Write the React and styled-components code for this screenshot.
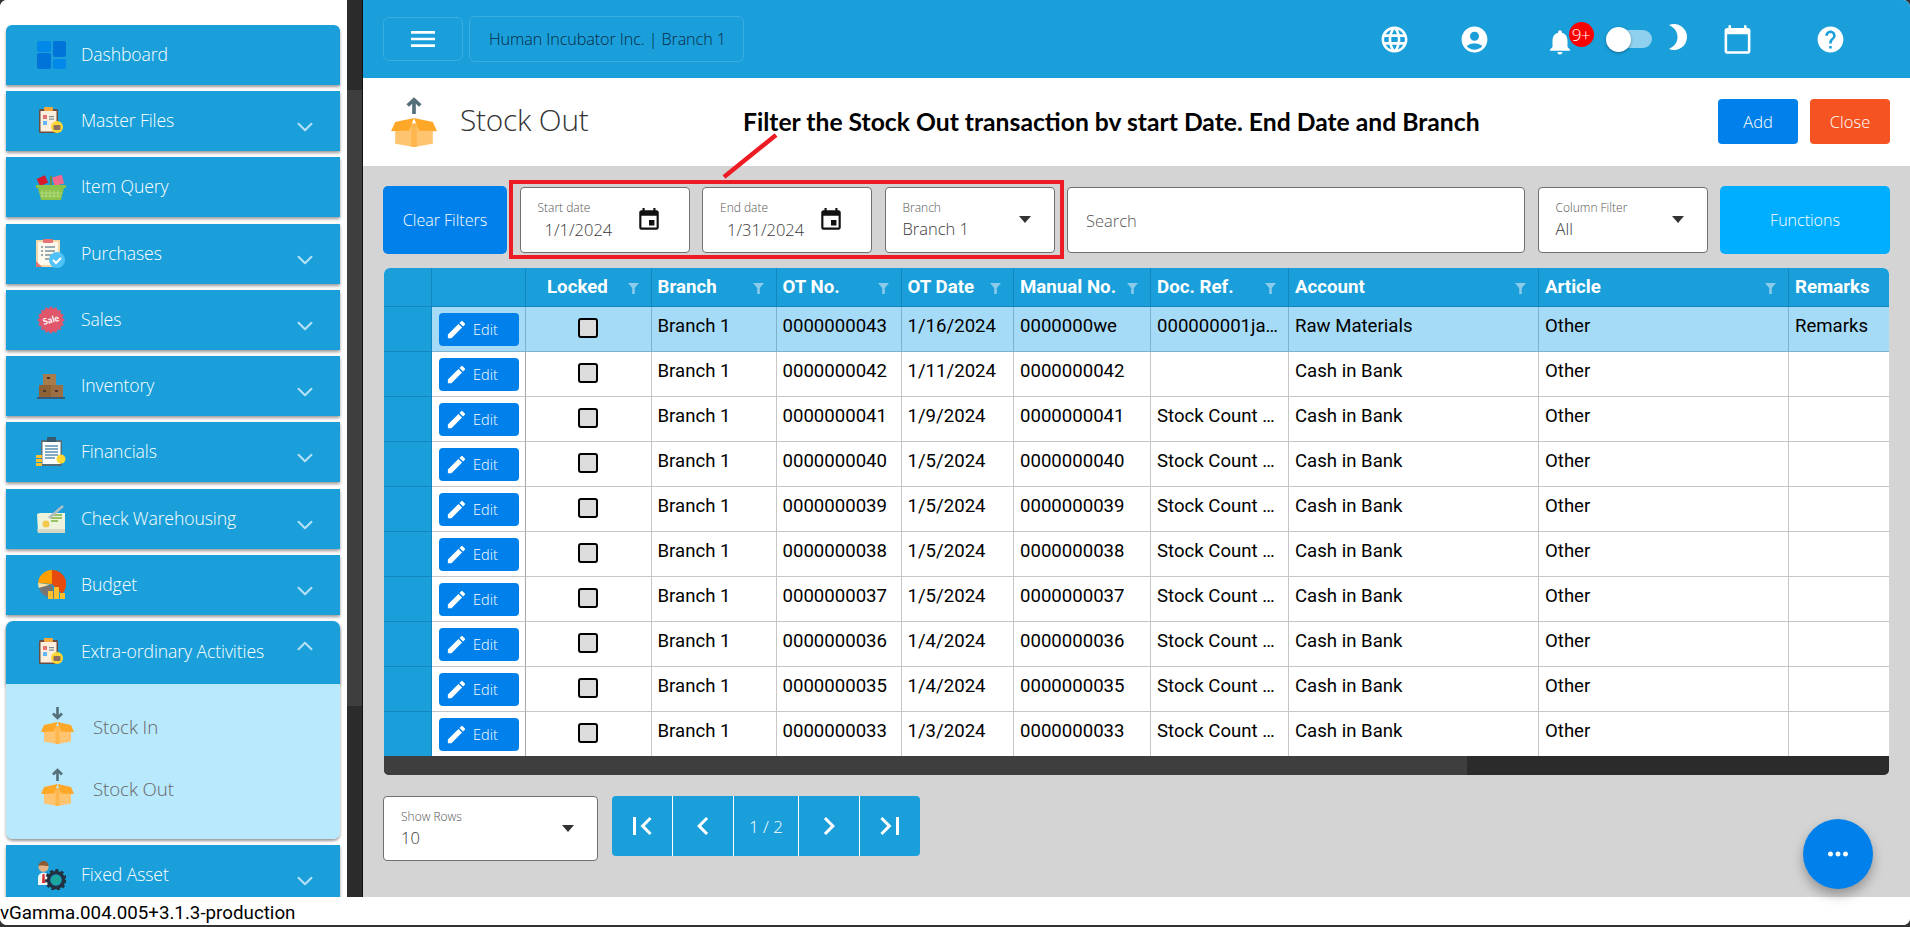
import React from "react";
import styled, { createGlobalStyle } from "styled-components";
import {
  MdLanguage, MdAccountCircle, MdNotifications, MdCalendarToday, MdHelp,
  MdMenu, MdEvent, MdEdit, MdFirstPage, MdLastPage, MdChevronLeft, MdChevronRight, MdMoreHoriz,
} from "react-icons/md";
import { ChevronDown, ChevronUp } from "lucide-react";

const UI = `"Open Sans", "Liberation Sans", sans-serif`;
const BLUE = "#1a9fda";
const COLS = "48px 94px 125.5px 125px 125px 112.5px 137px 138px 250px 250px 99.5px";

const Global = createGlobalStyle`
  html, body { margin: 0; padding: 0; background: #333; overflow: hidden; }
  * { box-sizing: border-box; }
`;

const Frame = styled.div`
  width: 1910px; height: 925px; display: flex; flex-direction: column;
  background: #fff; border-radius: 7px; overflow: hidden; font-family: ${UI};
  position: relative;
`;
const Body = styled.div`display: flex; height: 897px; flex: none;`;

const Sidebar = styled.nav`
  width: 347px; flex: none; height: 100%; background: #fff; padding: 25px 7px 0 6px;
  overflow: hidden; display: flex; flex-direction: column; gap: 6.22px;
`;
const NavItem = styled.div`
  flex: none; height: ${p => p.$h || 60}px; background: ${BLUE}; display: flex; align-items: center;
  color: #fff; box-shadow: 0 2px 3px rgba(0,0,0,.4);
  border-radius: ${p => p.$radius || "0"};
  padding-left: 30px; padding-right: 22px;
`;
const NavIcon = styled.span`width: 30px; height: 30px; flex: none; display: flex; align-items: center; justify-content: center; svg { display: block; }`;
const NavLabel = styled.span`margin-left: 15px; padding-bottom: 2px; flex: 1; font-size: 17.6px; font-weight: 300; white-space: nowrap; letter-spacing: -.1px;`;
const NavChevron = styled.span`
  display: flex; color: #b5e1f6; margin-top: ${p => p.$open ? "0" : "12px"}; margin-bottom: ${p => p.$open ? "12px" : "0"};
`;
const NavGroup = styled.div`flex: none; display: flex; flex-direction: column; border-radius: 7px; box-shadow: 0 2px 3px rgba(0,0,0,.4);`;
const SubPanel = styled.div`
  height: 155px; background: #b9e9fd; border-radius: 0 0 7px 7px; padding-top: 18px;
  display: flex; flex-direction: column; gap: 12px;
`;
const SubItem = styled.div`height: 50px; display: flex; align-items: center; padding-left: 35px; color: #666; svg { margin-top: -4px; }`;
const SubLabel = styled.span`margin-left: 19px; font-size: 18.7px; font-weight: 300; letter-spacing: -.1px;`;

const Track = styled.div`width: 15px; flex: none; background: #2b2b2b; padding-top: 90px;`;
const Thumb = styled.div`height: 616px; background: #3e3e3e;`;
const Divider = styled.div`width: 1px; flex: none; background: #111;`;

const Main = styled.main`flex: 1; min-width: 0; display: flex; flex-direction: column; position: relative;`;
const Topbar = styled.header`height: 78px; flex: none; background: ${BLUE}; display: flex; align-items: center; padding-left: 20px; color: #fff;`;
const MenuBtn = styled.div`
  width: 80px; height: 44px; border: 1px solid #3bade0; border-radius: 6px; display: flex; align-items: center; justify-content: center; color: #fff;
`;
const Company = styled.div`
  width: 275px; height: 46px; margin-left: 6px; border: 1px solid #3bade0; border-radius: 6px; display: flex; align-items: center;
  padding-left: 19px; font-size: 16.2px; font-weight: 300; color: #062a44; white-space: nowrap; letter-spacing: -.1px;
`;
const TopIcons = styled.div`display: flex; align-items: center; margin-left: 634px; height: 100%;`;
const TopIcon = styled.span`
  display: flex; align-items: center; justify-content: center; flex: none; width: 32px; color: #fff;
  margin-left: ${p => p.$ml || 0}px; transform: translateY(${p => p.$dy || 0}px);
`;
const BellWrap = styled.span`position: relative; display: flex; width: 30px; margin-left: 55px; color: #fff; transform: translateY(3px);`;
const Badge = styled.span`
  position: absolute; left: 23.5px; top: -5.5px; width: 25px; height: 25px; border-radius: 50%; background: #f00; color: #fff;
  font-size: 17px; font-weight: 300; display: flex; align-items: center; justify-content: center; letter-spacing: -.5px;
`;
const Toggle = styled.span`position: relative; display: block; flex: none; width: 46px; height: 18px; margin-left: 30.5px; `;
const ToggleTrack = styled.span`position: absolute; left: 13px; right: 0; top: 0; height: 18px; background: #8fd0ee; border-radius: 0 9px 9px 0;`;
const ToggleKnob = styled.span`position: absolute; left: 0; top: -3.5px; width: 25px; height: 25px; border-radius: 50%; background: #fff; box-shadow: 0 1px 3px rgba(0,0,0,.35);`;

const PageHeader = styled.section`height: 88px; flex: none; background: #fff; display: flex; align-items: center; padding: 0 20px 0 28px; position: relative;`;
const PageTitle = styled.h1`margin: 0 0 6px 23px; font-size: 29.8px; font-weight: 300; color: #333; flex: 1; letter-spacing: -.2px;`;
const ActionBtn = styled.button`
  width: 80px; height: 45px; border: 0; border-radius: 4px; background: ${p => p.$bg}; color: #fff; font-family: ${UI}; font-size: 16.5px; font-weight: 300;
  margin-left: ${p => p.$ml || 0}px; padding: 0; margin-bottom: 2px;
`;
const Annotation = styled.div`
  position: absolute; left: 380px; top: 32px; width: 736px; font-family: Lato, "Open Sans", sans-serif; font-weight: 700; font-size: 24.7px; color: #000; white-space: nowrap; line-height: 24px;
`;
const RedBox = styled.div`position: absolute; left: 509px; top: 180px; width: 555px; height: 79px; border: 4.5px solid #ed1c24; pointer-events: none;`;
const Arrow = styled.svg`position: absolute; left: 720px; top: 130px; pointer-events: none;`;

const Content = styled.section`flex: 1; min-height: 0; background: #d4d4d4; padding: 20px 20px 0; `;
const Toolbar = styled.div`display: flex; gap: 12.5px; height: 68px; align-items: center;`;
const ClearBtn = styled.button`
  width: 124px; height: 68px; flex: none; border: 0; border-radius: 5px; background: #0080ea; color: #fff; font-family: ${UI}; font-size: 16px; font-weight: 300; padding: 0;
`;
const FunctionsBtn = styled(ClearBtn)`width: 170px; background: #00aeff;`;
const Field = styled.div`
  width: ${p => p.$w || 170}px; height: 66px; flex: ${p => p.$grow ? 1 : "none"}; background: #fff; border: 1px solid #707070; border-radius: 4px;
  position: relative; padding: 12px 0 0 17px; color: #666;
`;
const FieldLabel = styled.div`font-size: 12px; font-weight: 300; line-height: 15px; color: #555; white-space: nowrap;`;
const FieldValue = styled.div`
  font-size: 16.5px; font-weight: 300; line-height: 26px; color: #3a3a3a; white-space: nowrap;
  padding-left: ${p => p.$indent || 0}px; margin-top: ${p => p.$indent ? 2 : 1}px;
`;
const CalIcon = styled.span`position: absolute; right: 27px; top: 19px; display: flex; color: #111;`;
const Caret = styled.span`
  position: absolute; right: 23px; top: 28px; width: 0; height: 0;
  border-left: 6.5px solid transparent; border-right: 6.5px solid transparent; border-top: 7px solid #333;
`;
const SearchText = styled.div`font-size: 16.5px; font-weight: 300; color: #555; line-height: 22px; padding-top: 10px; margin-left: 1px;`;

const Table = styled.div`margin: 14px 1px 0 1px; border-radius: 6px 6px 5px 5px; overflow: hidden;`;
const Row = styled.div`
  display: grid; grid-template-columns: ${COLS}; height: ${p => p.$h || 45}px;
  background: ${p => p.$sel ? "#a5dbf7" : "#fff"};
`;
const HeadCell = styled.div`
  background: ${BLUE}; border-right: 1px solid #1287bf; border-bottom: 1px solid #1287bf;
  color: #fff; font: 700 18.7px Roboto, sans-serif; display: flex; align-items: center; position: relative;
  padding-left: ${p => p.$pl || 6}px; padding-bottom: 1px; white-space: nowrap;
  &:last-child { border-right: 0; }
`;
const FilterIcon = styled.svg`position: absolute; right: 12px; top: 15px;`;
const Gutter = styled.div`background: ${BLUE}; border-right: 1px solid #1287bf; border-bottom: 1px solid #1287bf;`;
const Cell = styled.div`
  border-right: 1px solid ${p => p.$sel ? "#7fb2cf" : "#c6c6c6"}; border-bottom: 1px solid ${p => p.$sel ? "#7fb2cf" : "#c6c6c6"};
  font: 400 18.6px Roboto, sans-serif; color: #000; padding: 6px 6px 0; line-height: 27px; white-space: nowrap; overflow: hidden;
  &:last-child { border-right: 0; }
`;
const EditCell = styled(Cell)`padding: 6px 0 0 7px; border-right-color: ${p => p.$sel ? "#7fb2cf" : "#aaa"};`;
const EditBtn = styled.button`
  width: 80px; height: 33px; border: 0; border-radius: 4px; background: #0080ea; color: #fff; display: flex; align-items: center; padding: 0 0 0 6px;
  font-family: ${UI}; font-size: 14.5px; font-weight: 300; gap: 5px;
`;
const CheckCell = styled(Cell)`display: flex; justify-content: center; padding: 11px 0 0 0;`;
const CheckBox = styled.span`display: block; width: 20px; height: 20px; border: 2px solid #000; border-radius: 3px; background: #dcdcdc;`;
const HScroll = styled.div`height: 19px; margin-top: -1px; background: #2b2b2b; position: relative;`;
const HThumb = styled.div`width: 1083px; height: 100%; background: #3e3e3e;`;

const Footer = styled.div`display: flex; margin-top: 21px; align-items: flex-start;`;
const RowsField = styled(Field)`width: 215px; height: 65px; padding-left: 17px;`;
const Pager = styled.div`display: flex; margin-left: 14px; height: 60px; border-radius: 4px; overflow: hidden; background: ${BLUE};`;
const PagerBtn = styled.div`
  width: ${p => p.$w}px; height: 100%; display: flex; align-items: center; justify-content: center; color: #fff; font-size: 17px; font-weight: 300;
  border-left: ${p => p.$first ? 0 : "1px solid #fff"};
`;
const Fab = styled.div`
  position: absolute; right: 37px; bottom: 8px; width: 70px; height: 70px; border-radius: 50%; background: #0080ea; color: #fff; z-index: 5;
  display: flex; align-items: center; justify-content: center; box-shadow: 0 6px 12px rgba(0,0,0,.3);
`;
const VersionBar = styled.div`
  height: 28px; flex: none; background: #fff; font: 400 18.75px Roboto, sans-serif; color: #000; line-height: 28px; padding-top: 2px; white-space: nowrap;
`;

/* ---- drawn icons ---- */
const MoonIcon = () => (
  <svg width="20" height="26" viewBox="0 0 20 26">
    <path d="M1 1A13 13 0 1 1 1 25C7 22 9.500 18 9.500 13C9.500 8 7 4 1 1Z" fill="currentColor" />
  </svg>
);
const DashIcon = () => (
  <svg width="29" height="28" viewBox="0 0 29 28">
    <rect x="0" y="0" width="14" height="11" rx="2" fill="#0288e8" />
    <rect x="0" y="12" width="14" height="16" rx="2" fill="#0074d9" />
    <rect x="16" y="0" width="13" height="16" rx="2" fill="#0074d9" />
    <rect x="16" y="18" width="13" height="10" rx="2" fill="#0288e8" />
  </svg>
);
const ClipIcon = () => (
  <svg width="26" height="28" viewBox="0 0 26 28">
    <rect x="1" y="2" width="19" height="24" rx="1.500" fill="#6d4c41" />
    <rect x="2.500" y="4" width="16" height="20.500" fill="#fbeedd" />
    <rect x="6" y="0" width="9" height="4" rx="1" fill="#f6a83b" />
    <rect x="5" y="8" width="4" height="4" fill="#e57373" />
    <rect x="5" y="14" width="4" height="4" fill="#64b5f6" />
    <rect x="11" y="9" width="5" height="1.200" fill="#78909c" />
    <rect x="11" y="11.500" width="5" height="1.200" fill="#78909c" />
    <circle cx="19" cy="20" r="6" fill="#fdd835" />
    <rect x="15.500" y="18" width="7" height="5" rx="1" fill="#8d6e63" />
  </svg>
);
const BasketIcon = () => (
  <svg width="30" height="27" viewBox="0 0 30 27">
    <rect x="2" y="3" width="9" height="8" fill="#d81b2c" transform="rotate(-25 6 7)" />
    <rect x="17" y="2" width="10" height="9" fill="#f2688b" transform="rotate(-15 22 6)" />
    <rect x="14" y="2" width="1.800" height="10" fill="#6d8b2f" />
    <path d="M0 11h30v3H0z" fill="#8bc34a" />
    <path d="M2 14h26l-3 12H5z" fill="#8bc34a" />
    <path d="M6 16v8M10 16v8M14 16v8M18 16v8M22 16v8M4 19h22M5 22h20" stroke="#b5d982" strokeWidth="1" />
  </svg>
);
const PurchaseIcon = () => (
  <svg width="30" height="29" viewBox="0 0 30 29">
    <rect x="0" y="1" width="24" height="27" fill="#f4d7a7" />
    <rect x="2" y="3" width="20" height="23" fill="#fff8ec" />
    <rect x="7" y="0" width="10" height="4" rx="1" fill="#e57373" />
    <path d="M9 8h10M9 12h10M9 16h7M9 20h4" stroke="#78909c" strokeWidth="1.500" />
    <path d="M5 8h2M5 12h2M5 16h2" stroke="#78909c" strokeWidth="1.500" />
    <path d="M0 22l6 6H0z" fill="#e57373" />
    <circle cx="21" cy="21" r="8" fill="#4fc3f7" />
    <path d="M17 21l3 3 5-5" stroke="#fff" strokeWidth="2" fill="none" />
  </svg>
);
const SaleIcon = () => {
  const pts = [];
  for (let i = 0; i < 32; i++) {
    const r = i % 2 ? 11.5 : 14;
    const a = (i / 32) * Math.PI * 2;
    pts.push(`${14 + r * Math.cos(a)},${14 + r * Math.sin(a)}`);
  }
  return (
    <svg width="28" height="28" viewBox="0 0 28 28">
      <polygon points={pts.join(" ")} fill="#e0566b" />
      <text x="14" y="17" textAnchor="middle" fontSize="9" fontWeight="700" fill="#fff" fontFamily="Lato, sans-serif" transform="rotate(-15 14 14)">Sale</text>
    </svg>
  );
};
const BoxesIcon = () => (
  <svg width="28" height="25" viewBox="0 0 28 25">
    <rect x="6" y="0" width="13" height="11" fill="#a87b4c" />
    <rect x="2" y="11" width="12" height="12" fill="#8f6236" />
    <rect x="14" y="11" width="12" height="12" fill="#9c6e41" />
    <rect x="10" y="3" width="3" height="2" fill="#4e342e" />
    <rect x="6" y="16" width="3" height="2" fill="#4e342e" />
    <rect x="18" y="16" width="3" height="2" fill="#4e342e" />
    <rect x="0" y="23" width="28" height="2" fill="#37597a" />
  </svg>
);
const FinIcon = () => (
  <svg width="30" height="30" viewBox="0 0 30 30">
    <rect x="5" y="3" width="21" height="26" rx="1" fill="#546e7a" />
    <rect x="6.500" y="5" width="18" height="22" fill="#fff" />
    <rect x="11" y="0" width="9" height="5" rx="1" fill="#37596e" />
    <path d="M9 9h13M9 12h13M9 15h13M9 18h13M9 21h10" stroke="#5b8fb0" strokeWidth="1.300" />
    <rect x="0" y="18" width="6" height="3" fill="#fbc02d" />
    <rect x="0" y="22" width="6" height="3" fill="#fbc02d" />
    <rect x="0" y="26" width="6" height="3" fill="#fbc02d" />
    <circle cx="25" cy="22" r="4.500" fill="#fdd835" />
  </svg>
);
const CheckIcon = () => (
  <svg width="28" height="28" viewBox="0 0 28 28">
    <path d="M0 9l3 -1h25v19H1z" fill="#eef3dc" />
    <path d="M0 24h28v4H1z" fill="#d8d8c4" />
    <path d="M14 10h11M14 13h11M14 16h7" stroke="#7cb342" strokeWidth="1.400" />
    <path d="M12 13L26 1" stroke="#b0bec5" strokeWidth="2.600" />
    <circle cx="9" cy="19" r="3.600" fill="#f2c94c" />
  </svg>
);
const PieIcon = () => (
  <svg width="29" height="29" viewBox="0 0 29 29">
    <path d="M15 0A14 14 0 0 1 25 24L15 14z" fill="#e64a0c" />
    <path d="M15 0v14L1 13A14 14 0 0 1 15 0z" fill="#ffa000" />
    <path d="M1 13l14 2-13 3a14 14 0 0 1-1-5z" fill="#ffe0a0" />
    <path d="M2 18l13-4 3 14a14 14 0 0 1-16-10z" fill="#757575" />
    <rect x="11" y="21" width="5" height="8" fill="#fbc02d" />
    <rect x="17" y="17" width="5" height="12" fill="#fbc02d" />
    <rect x="23" y="23" width="5" height="6" fill="#fbc02d" />
  </svg>
);
const AssetIcon = () => (
  <svg width="30" height="30" viewBox="0 0 30 30">
    <path d="M2 18a5.500 5.500 0 0 1 11 0v7H2z" fill="#f5f5f5" />
    <path d="M6.500 14h2l.5 9h-3z" fill="#d32f2f" />
    <circle cx="7.500" cy="7" r="5" fill="#e3b487" />
    <path d="M2.500 6a5 5 0 0 1 10 0c-3 0-7-1-10 0z" fill="#8d5a33" />
    <circle cx="20" cy="20" r="7.500" fill="none" stroke="#22313f" strokeWidth="3.500" />
    <circle cx="20" cy="20" r="9.700" fill="none" stroke="#22313f" strokeWidth="2.500" strokeDasharray="3 2.600" />
    <circle cx="20" cy="20" r="5" fill="#1ba59b" />
  </svg>
);
const BoxIcon = ({ dir, w = 33, h = 38 }) => (
  <svg width={w} height={h} viewBox="0 0 33 38" preserveAspectRatio="none">
    {dir === "up"
      ? <path d="M16.500 13V2M12 6.500L16.500 2 21 6.500" stroke="#546e7a" strokeWidth="2.600" fill="none" />
      : <path d="M16.500 1v11M12 7.500l4.500 4.500L21 7.500" stroke="#546e7a" strokeWidth="2.600" fill="none" />}
    <path d="M3 21h27v14.500L16.500 38 3 35.500z" fill="#ffc470" />
    <path d="M14.500 20h4v18h-4z" fill="#ffb74d" />
    <path d="M16.500 16L3 19 0 26l13-.5z" fill="#ffa726" />
    <path d="M16.500 16L30 19l3 7-13-.5z" fill="#ffa726" />
  </svg>
);
const FunnelIcon = () => (
  <FilterIcon width="11" height="11" viewBox="0 0 13 13">
    <path d="M0 0h13L8 6v7H5V6z" fill="#8ccbe9" />
  </FilterIcon>
);

const NAV = [
  ["Dashboard", DashIcon, false, "6px 6px 0 0"],
  ["Master Files", ClipIcon, true],
  ["Item Query", BasketIcon, false],
  ["Purchases", PurchaseIcon, true],
  ["Sales", SaleIcon, true],
  ["Inventory", BoxesIcon, true],
  ["Financials", FinIcon, true],
  ["Check Warehousing", CheckIcon, true],
  ["Budget", PieIcon, true],
];

const HEAD = [["", 0], ["", 0], ["Locked", 21], ["Branch"], ["OT No."], ["OT Date"], ["Manual No."], ["Doc. Ref."], ["Account"], ["Article"], ["Remarks"]];
const SC = "Stock Count …";
const ROWS = [
  ["0000000043", "1/16/2024", "0000000we", "000000001ja…", "Raw Materials", "Remarks"],
  ["0000000042", "1/11/2024", "0000000042", "", "Cash in Bank", ""],
  ["0000000041", "1/9/2024", "0000000041", SC, "Cash in Bank", ""],
  ["0000000040", "1/5/2024", "0000000040", SC, "Cash in Bank", ""],
  ["0000000039", "1/5/2024", "0000000039", SC, "Cash in Bank", ""],
  ["0000000038", "1/5/2024", "0000000038", SC, "Cash in Bank", ""],
  ["0000000037", "1/5/2024", "0000000037", SC, "Cash in Bank", ""],
  ["0000000036", "1/4/2024", "0000000036", SC, "Cash in Bank", ""],
  ["0000000035", "1/4/2024", "0000000035", SC, "Cash in Bank", ""],
  ["0000000033", "1/3/2024", "0000000033", SC, "Cash in Bank", ""],
];

export default function App() {
  return (
    <Frame>
      <Global />
      <Body>
        <Sidebar>
          {NAV.map(([label, Icon, chev, radius]) => (
            <NavItem key={label} $radius={radius}>
              <NavIcon><Icon /></NavIcon>
              <NavLabel>{label}</NavLabel>
              {chev && <NavChevron><ChevronDown size={26} strokeWidth={1.9} /></NavChevron>}
            </NavItem>
          ))}
          <NavGroup>
            <NavItem $h={63} $radius="7px 7px 0 0">
              <NavIcon><ClipIcon /></NavIcon>
              <NavLabel>Extra-ordinary Activities</NavLabel>
              <NavChevron $open><ChevronUp size={26} strokeWidth={1.9} /></NavChevron>
            </NavItem>
            <SubPanel>
              <SubItem><BoxIcon dir="down" /><SubLabel>Stock In</SubLabel></SubItem>
              <SubItem><BoxIcon dir="up" /><SubLabel>Stock Out</SubLabel></SubItem>
            </SubPanel>
          </NavGroup>
          <NavItem>
            <NavIcon><AssetIcon /></NavIcon>
            <NavLabel>Fixed Asset</NavLabel>
            <NavChevron><ChevronDown size={26} strokeWidth={1.9} /></NavChevron>
          </NavItem>
        </Sidebar>
        <Track><Thumb /></Track>
        <Divider />
        <Main>
          <Topbar>
            <MenuBtn><MdMenu size={32} /></MenuBtn>
            <Company>Human Incubator Inc. | Branch 1</Company>
            <TopIcons>
              <TopIcon><MdLanguage size={31} /></TopIcon>
              <TopIcon $ml={48}><MdAccountCircle size={31} /></TopIcon>
              <BellWrap><MdNotifications size={30} /><Badge>9+</Badge></BellWrap>
              <Toggle><ToggleTrack /><ToggleKnob /></Toggle>
              <TopIcon $ml={10.5} $dy={-2}><MoonIcon /></TopIcon>
              <TopIcon $ml={27.5}><MdCalendarToday size={31} /></TopIcon>
              <TopIcon $ml={60.5}><MdHelp size={31} /></TopIcon>
            </TopIcons>
          </Topbar>
          <PageHeader>
            <BoxIcon dir="up" w={46} h={50} />
            <PageTitle>Stock Out</PageTitle>
            <Annotation>Filter the Stock Out transaction bv start Date. End Date and Branch</Annotation>
            <ActionBtn $bg="#0080ea">Add</ActionBtn>
            <ActionBtn $bg="#f55322" $ml={12}>Close</ActionBtn>
          </PageHeader>
          <Content>
            <Toolbar>
              <ClearBtn>Clear Filters</ClearBtn>
              <Field>
                <FieldLabel>Start date</FieldLabel>
                <FieldValue $indent={7}>1/1/2024</FieldValue>
                <CalIcon><MdEvent size={26} /></CalIcon>
              </Field>
              <Field>
                <FieldLabel>End date</FieldLabel>
                <FieldValue $indent={7}>1/31/2024</FieldValue>
                <CalIcon><MdEvent size={26} /></CalIcon>
              </Field>
              <Field>
                <FieldLabel>Branch</FieldLabel>
                <FieldValue>Branch 1</FieldValue>
                <Caret />
              </Field>
              <Field $grow>
                <SearchText>Search</SearchText>
              </Field>
              <Field>
                <FieldLabel>Column Filter</FieldLabel>
                <FieldValue>All</FieldValue>
                <Caret />
              </Field>
              <FunctionsBtn>Functions</FunctionsBtn>
            </Toolbar>
            <Table>
              <Row $h={39}>
                {HEAD.map(([t, pl], i) => (
                  <HeadCell key={i} $pl={pl}>
                    {t}
                    {t && t !== "Remarks" && <FunnelIcon />}
                  </HeadCell>
                ))}
              </Row>
              {ROWS.map((r, i) => {
                const sel = i === 0;
                return (
                  <Row key={r[0]} $sel={sel}>
                    <Gutter />
                    <EditCell $sel={sel}>
                      <EditBtn><MdEdit size={23} />Edit</EditBtn>
                    </EditCell>
                    <CheckCell $sel={sel}><CheckBox /></CheckCell>
                    <Cell $sel={sel}>Branch 1</Cell>
                    <Cell $sel={sel}>{r[0]}</Cell>
                    <Cell $sel={sel}>{r[1]}</Cell>
                    <Cell $sel={sel}>{r[2]}</Cell>
                    <Cell $sel={sel}>{r[3]}</Cell>
                    <Cell $sel={sel}>{r[4]}</Cell>
                    <Cell $sel={sel}>Other</Cell>
                    <Cell $sel={sel}>{r[5]}</Cell>
                  </Row>
                );
              })}
              <HScroll><HThumb /></HScroll>
            </Table>
            <Footer>
              <RowsField>
                <FieldLabel>Show Rows</FieldLabel>
                <FieldValue>10</FieldValue>
                <Caret />
              </RowsField>
              <Pager>
                <PagerBtn $w={60} $first><MdFirstPage size={36} /></PagerBtn>
                <PagerBtn $w={61}><MdChevronLeft size={36} /></PagerBtn>
                <PagerBtn $w={65}>1 / 2</PagerBtn>
                <PagerBtn $w={61}><MdChevronRight size={36} /></PagerBtn>
                <PagerBtn $w={61}><MdLastPage size={36} /></PagerBtn>
              </Pager>
            </Footer>
          </Content>
          <Fab><MdMoreHoriz size={30} /></Fab>
        </Main>
      </Body>
      <VersionBar>vGamma.004.005+3.1.3-production</VersionBar>
      <RedBox />
      <Arrow width="60" height="50" viewBox="0 0 60 50">
        <path d="M56 5L4 47" stroke="#ed1c24" strokeWidth="4.5" />
      </Arrow>
    </Frame>
  );
}
